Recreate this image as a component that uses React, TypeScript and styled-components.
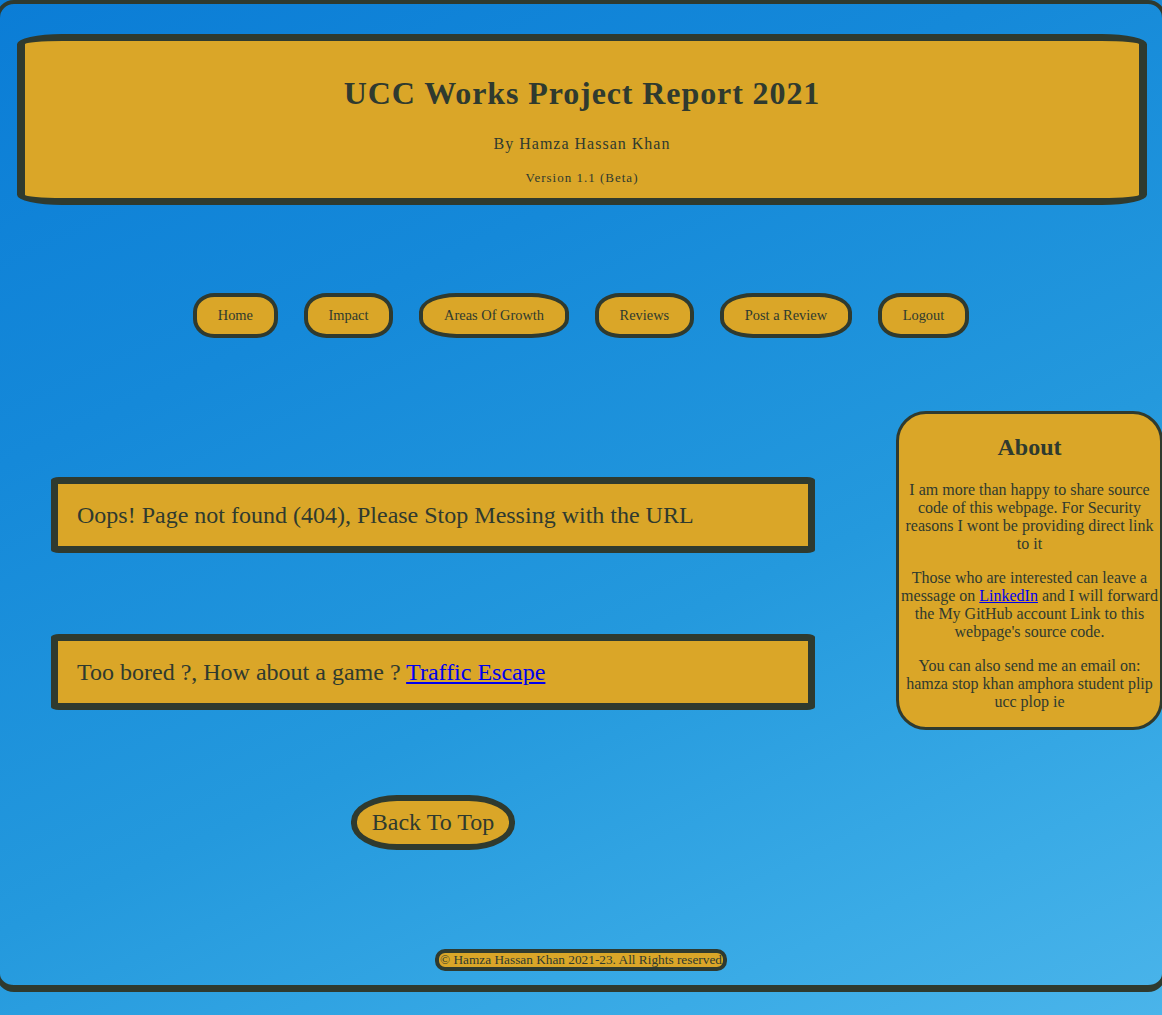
import styled, { createGlobalStyle } from "styled-components";

const ink = "#2f3a2f";
const gold = "#daa628";

const GlobalStyle = createGlobalStyle`
  html, body {
    margin: 0;
    padding: 0;
  }
  body {
    min-height: 1015px;
    overflow-x: hidden;
    font-family: "Liberation Serif", "Times New Roman", serif;
    color: ${ink};
    background: linear-gradient(155deg, #0b7dd6 0%, #1589d9 30%, #2499dd 60%, #3aabe6 85%, #4ab4ea 100%);
    background-attachment: fixed;
  }
`;

const Frame = styled.div`
  box-sizing: border-box;
  width: calc(100% + 8px);
  margin-left: -4px;
  border: 4px solid ${ink};
  border-bottom-width: 7px;
  border-radius: 18px;
  padding: 30px 0 14px;
  display: flex;
  flex-direction: column;
`;

const Header = styled.header`
  margin: 0 15px 0 17px;
  background: ${gold};
  border: 7px solid ${ink};
  border-left-width: 8px;
  border-right-width: 8px;
  border-radius: 4% / 6%;
  padding: 32px 0 12px;
  text-align: center;
`;

const Title = styled.h1`
  margin: 0;
  font-size: 32px;
  line-height: 40px;
  letter-spacing: 0.9px;
  font-weight: bold;
`;

const Byline = styled.p<{ size: number; gap: number }>`
  margin: ${(p) => p.gap}px 0 0;
  font-size: ${(p) => p.size}px;
  line-height: ${(p) => p.size + 4}px;
  letter-spacing: 1px;
`;

const Nav = styled.nav`
  margin-top: 88px;
  display: flex;
  justify-content: center;
  gap: 25.6px;
`;

const NavButton = styled.a`
  background: ${gold};
  border: 4px solid ${ink};
  border-radius: 25% / 42%;
  padding: 10px 21px 11px;
  font-size: 14.4px;
  line-height: 16px;
  color: ${ink};
  text-decoration: none;
`;

const Row = styled.div`
  margin-top: 73px;
  display: flex;
  align-items: flex-start;
`;

const Main = styled.main`
  margin-left: 51px;
  width: 764px;
  padding-top: 66px;
  display: flex;
  flex-direction: column;
  gap: 81px;
`;

const Notice = styled.div`
  background: ${gold};
  border: 7px solid ${ink};
  border-radius: 8px / 3px;
  padding: 17px 19px;
  font-size: 24px;
  line-height: 28px;
`;

const Link = styled.a`
  color: #0000ee;
  text-decoration: underline;
`;

const BackWrap = styled.div`
  display: flex;
  justify-content: center;
  margin-top: 4px;
`;

const BackButton = styled.a`
  background: ${gold};
  border: 6px solid ${ink};
  border-radius: 28% / 48%;
  padding: 7px 15px 8px;
  font-size: 24px;
  line-height: 28px;
  color: ${ink};
  text-decoration: none;
`;

const About = styled.aside`
  margin-left: auto;
  margin-right: -1px;
  width: 261px;
  background: ${gold};
  border: 3px solid ${ink};
  border-radius: 30px;
  padding: 19px 0 16px;
  text-align: center;
  font-size: 16px;
  line-height: 18px;
`;

const AboutHeading = styled.h2`
  margin: 0 0 20px;
  font-size: 24px;
  line-height: 28px;
  font-weight: bold;
`;

const AboutPara = styled.p`
  margin: 0 0 16px;
  &:last-child {
    margin-bottom: 0;
  }
`;

const Footer = styled.footer`
  margin-top: 99px;
  display: flex;
  justify-content: center;
`;

const Copyright = styled.div`
  background: ${gold};
  border: 4px solid ${ink};
  border-radius: 10px;
  padding: 0 1px;
  font-size: 13.3px;
  line-height: 14px;
  white-space: nowrap;
`;

const links = ["Home", "Impact", "Areas Of Growth", "Reviews", "Post a Review", "Logout"];

export default function App() {
  return (
    <>
      <GlobalStyle />
      <Frame>
        <Header>
          <Title>UCC Works Project Report 2021</Title>
          <Byline size={16} gap={21}>
            By Hamza Hassan Khan
          </Byline>
          <Byline size={13} gap={15}>
            Version 1.1 (Beta)
          </Byline>
        </Header>
        <Nav>
          {links.map((l) => (
            <NavButton key={l} href="#">
              {l}
            </NavButton>
          ))}
        </Nav>
        <Row>
          <Main>
            <Notice>Oops! Page not found (404), Please Stop Messing with the URL</Notice>
            <Notice>
              Too bored ?, How about a game ? <Link href="#">Traffic Escape</Link>
            </Notice>
            <BackWrap>
              <BackButton href="#">Back To Top</BackButton>
            </BackWrap>
          </Main>
          <About>
            <AboutHeading>About</AboutHeading>
            <AboutPara>
              I am more than happy to share source code of this webpage. For Security reasons I wont be
              providing direct link to it
            </AboutPara>
            <AboutPara>
              Those who are interested can leave a message on <Link href="#">LinkedIn</Link> and I will
              forward the My GitHub account Link to this webpage's source code.
            </AboutPara>
            <AboutPara>
              You can also send me an email on: hamza stop khan amphora student plip ucc plop ie
            </AboutPara>
          </About>
        </Row>
        <Footer>
          <Copyright>© Hamza Hassan Khan 2021-23. All Rights reserved</Copyright>
        </Footer>
      </Frame>
    </>
  );
}
